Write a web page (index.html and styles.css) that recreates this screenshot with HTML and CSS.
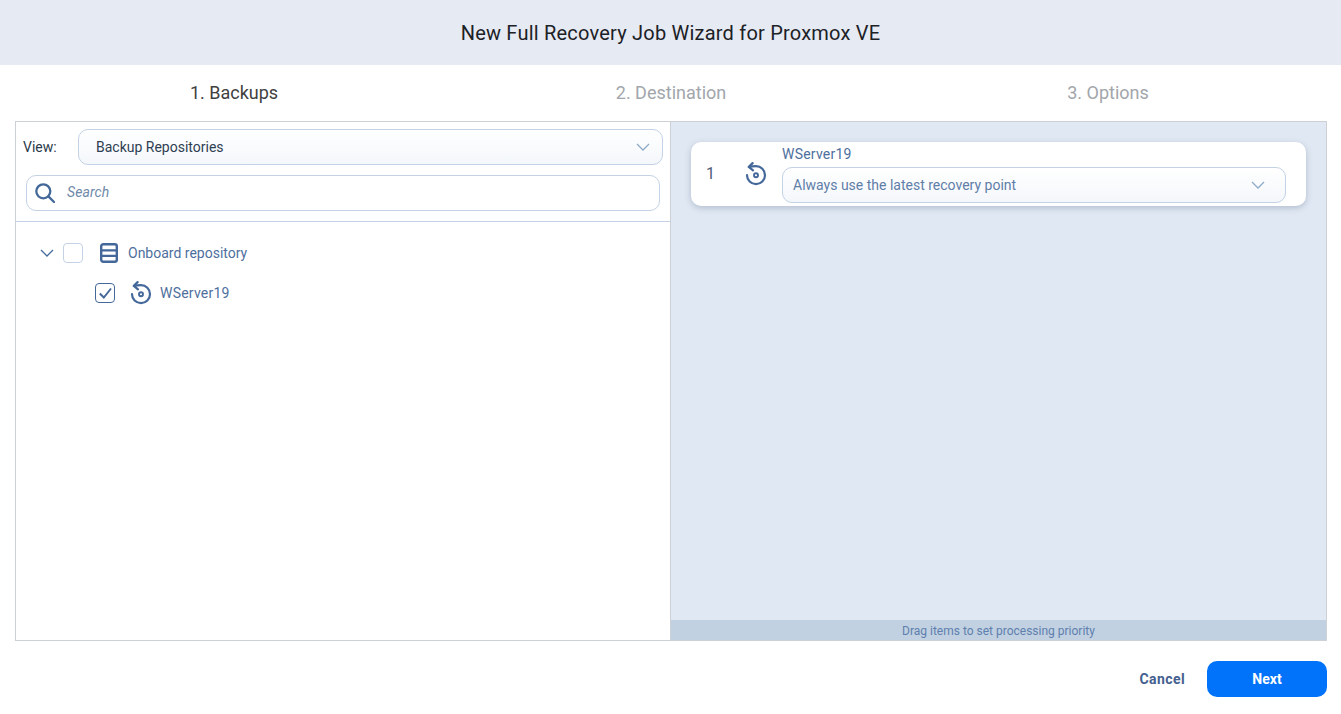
FILE: index.html
```html
<!DOCTYPE html>
<html lang="en">
<head>
<meta charset="utf-8">
<title>New Full Recovery Job Wizard for Proxmox VE</title>
<link rel="stylesheet" href="styles.css">
</head>
<body>
<svg class="defs" width="0" height="0" aria-hidden="true">
  <symbol id="restore" viewBox="1 0 22 24">
    <path d="M5 5Q8 4.2 12 4.2A9 9 0 1 1 3 13.2" fill="none" stroke="currentColor" stroke-width="2.2" stroke-linecap="round"/>
    <path d="M8.6 1.1 4.8 4.9 9 8.4" fill="none" stroke="currentColor" stroke-width="2.2" stroke-linecap="round" stroke-linejoin="round"/>
    <circle cx="12" cy="13.2" r="2" fill="none" stroke="currentColor" stroke-width="1.9"/>
  </symbol>
  <symbol id="chev" viewBox="0 0 14 8">
    <path d="M1 1l6 6 6-6" fill="none" stroke="currentColor" stroke-width="1.3"/>
  </symbol>
</svg>
<header class="title">New Full Recovery Job Wizard for Proxmox VE</header>
<nav class="steps">
  <div class="step active">1. Backups</div>
  <div class="step">2. Destination</div>
  <div class="step">3. Options</div>
</nav>
<main class="panels">
  <section class="left">
    <div class="view-row">
      <span class="view-label">View:</span>
      <div class="select view-select">
        <span>Backup Repositories</span>
        <svg class="chev"><use href="#chev"/></svg>
      </div>
    </div>
    <div class="search">
      <svg class="search-icon" viewBox="0 0 20 20"><circle cx="8.3" cy="8.3" r="7" fill="none" stroke="currentColor" stroke-width="2.3"/><path d="M13.4 13.4 19 19" stroke="currentColor" stroke-width="2.3" stroke-linecap="round"/></svg>
      <span class="placeholder">Search</span>
    </div>
    <div class="tree">
      <div class="row row-repo">
        <svg class="tree-chev"><use href="#chev"/></svg>
        <span class="check"></span>
        <svg class="repo-icon" viewBox="0 0 18 20"><rect x="1.2" y="1.2" width="15.6" height="17.6" rx="2" fill="none" stroke="currentColor" stroke-width="2.4"/><path d="M1 7.4h16M1 12.8h16" stroke="currentColor" stroke-width="2.2"/></svg>
        <span class="label">Onboard repository</span>
      </div>
      <div class="row row-vm">
        <span class="check checked"><svg viewBox="0 0 18 18"><path d="M3.8 9.5l4 4L15 4.5" fill="none" stroke="currentColor" stroke-width="1.9"/></svg></span>
        <svg class="restore"><use href="#restore"/></svg>
        <span class="label name">WServer19</span>
      </div>
    </div>
  </section>
  <section class="right">
    <div class="list">
      <div class="card">
        <span class="num">1</span>
        <svg class="restore card-icon"><use href="#restore"/></svg>
        <div class="card-body">
          <div class="card-name name">WServer19</div>
          <div class="select point-select">
            <span>Always use the latest recovery point</span>
            <svg class="chev"><use href="#chev"/></svg>
          </div>
        </div>
      </div>
    </div>
    <div class="hint">Drag items to set processing priority</div>
  </section>
</main>
<footer class="footer">
  <button class="btn cancel">Cancel</button>
  <button class="btn next">Next</button>
</footer>
</body>
</html>
```

FILE: styles.css
```css
* { box-sizing: border-box; }
html, body { margin: 0; height: 100%; }
body { background: #fff; font-family: Roboto, "Liberation Sans", sans-serif; color: #44689a; overflow: hidden; }
.defs { position: absolute; }

.title { height: 65px; background: #e6eaf3; display: flex; align-items: center; justify-content: center; font-size: 20px; letter-spacing: .21px; color: #1c2126; }

.steps { height: 56px; display: grid; grid-template-columns: 438px 436px 438px; margin: 0 14px 0 15px; padding-bottom: 2px; align-items: center; text-align: center; font-size: 18px; color: #a2a6ab; }
.step.active { color: #3f3f3f; }

.panels { height: 520px; margin: 0 14px 0 15px; border: 1px solid #cdd1d6; display: grid; grid-template-columns: 655px 1fr; }

.left { border-right: 1px solid #cdd1d6; display: flex; flex-direction: column; min-width: 0; }
.view-row { display: flex; align-items: center; padding: 7px 7px 0 7px; gap: 21px; }
.view-label { font-size: 14px; color: #2b3a4a; width: 34px; }

.select { display: flex; align-items: center; justify-content: space-between; border: 1px solid #c3d2e4; border-radius: 10px; background: linear-gradient(#fff, #f4f7fb); font-size: 14px; }
.view-select { flex: 1; height: 36px; padding: 0 12px 0 17px; color: #2f3e52; }
.chev { width: 14px; height: 8px; color: #8fabc9; flex: none; }

.search { margin: 10px 10px 0 10px; height: 36px; border: 1px solid #c3d2e4; border-radius: 10px; display: flex; align-items: center; padding-left: 8px; }
.search-icon { width: 20px; height: 20px; color: #44689a; margin-right: 12px; }
.placeholder { font-size: 14px; font-style: italic; color: #6f89a9; letter-spacing: .1px; padding-bottom: 2px; }

.tree { margin-top: 10px; border-top: 1px solid #c3d2e4; padding-top: 11px; flex: 1; }
.row { display: flex; align-items: center; height: 40px; font-size: 14px; }
.row-repo { padding-left: 24px; }
.row-vm { padding-left: 79px; }
.tree-chev { width: 14px; height: 8px; color: #44689a; margin-right: 9px; }
.check { width: 20px; height: 20px; border: 1px solid #c3d2e4; border-radius: 4px; flex: none; background: #fff; }
.check.checked { border-color: #44689a; color: #44689a; }
.check.checked svg { display: block; width: 18px; height: 18px; }
.repo-icon { width: 18px; height: 20px; color: #44689a; margin-left: 17px; margin-right: 10px; }
.restore { width: 22px; height: 24px; color: #44689a; flex: none; }
.row-vm .restore { margin-left: 15px; margin-right: 8px; }
.label { color: #4e6f9d; }
.name { letter-spacing: .22px; }

.right { background: #e0e8f3; display: flex; flex-direction: column; min-width: 0; }
.list { flex: 1; padding: 20px 20px 0 20px; }
.card { height: 64px; background: #fff; border-radius: 10px; box-shadow: 0 2px 6px rgba(60, 80, 110, .28); display: flex; align-items: center; }
.num { width: 54px; padding: 0 0 2px 15px; font-size: 16px; color: #4f5d75; }
.card-icon { margin-right: 15px; }
.card-body { flex: 1; padding-right: 20px; padding-top: 1px; }
.card-name { font-size: 14px; line-height: 16px; color: #4e6f9d; margin-bottom: 5px; }
.point-select { height: 36px; padding: 0 20px 0 10px; color: #5f7ea8; }
.hint { height: 20px; background: #c1d1e2; text-align: center; font-size: 12px; line-height: 22px; color: #5f7fae; }

.footer { display: flex; justify-content: flex-end; align-items: center; gap: 22px; padding: 20px 14px 0 0; }
.btn { border: 0; font-family: inherit; font-size: 14px; font-weight: 700; height: 36px; border-radius: 10px; padding: 0; }
.cancel { background: none; color: #44608f; letter-spacing: .4px; }
.next { width: 120px; background: #0073fa; color: #fff; }
```
